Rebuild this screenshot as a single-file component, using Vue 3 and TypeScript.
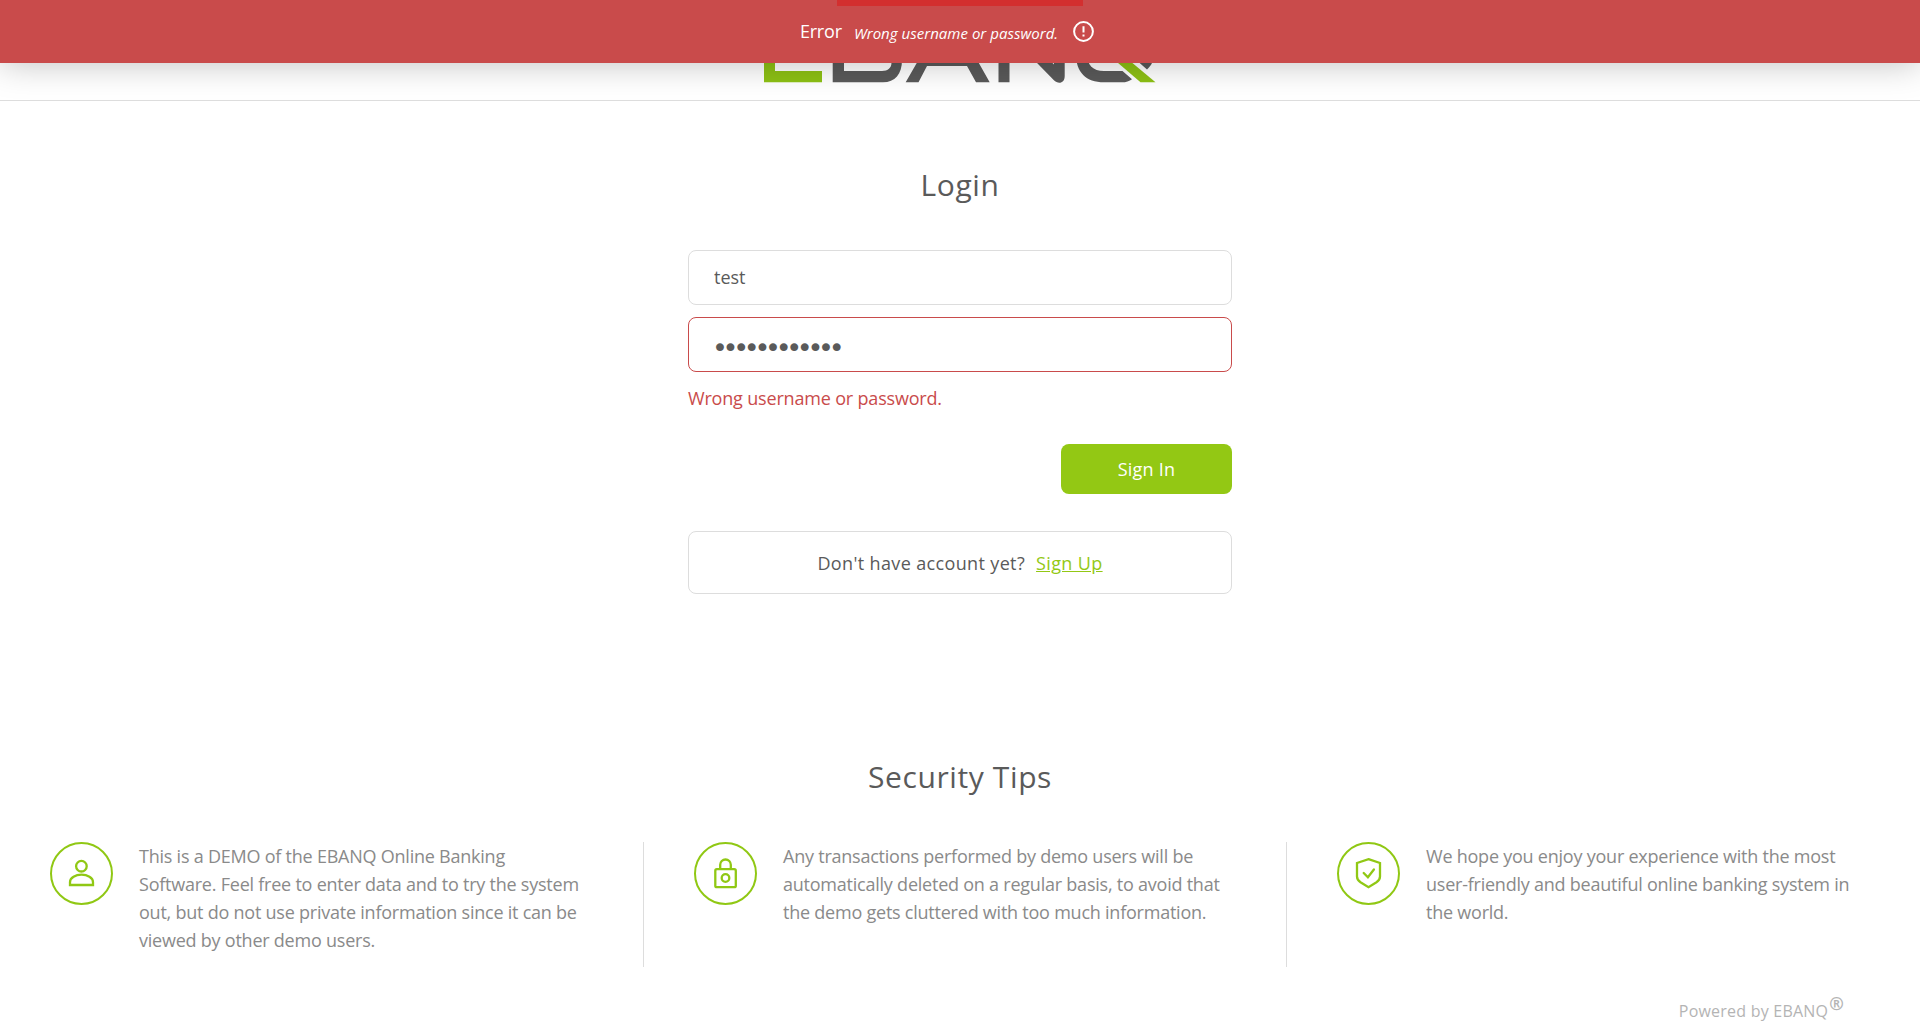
<script setup lang="ts">
import { ref } from 'vue'

type TipIcon = 'user' | 'lock' | 'shield'

interface Tip {
  icon: TipIcon
  lines: string[]
}

const username = ref('test')
const password = ref('testpassword')
const errorText = 'Wrong username or password.'

const tips: Tip[] = [
  {
    icon: 'user',
    lines: [
      'This is a DEMO of the EBANQ Online Banking',
      'Software. Feel free to enter data and to try the system',
      'out, but do not use private information since it can be',
      'viewed by other demo users.',
    ],
  },
  {
    icon: 'lock',
    lines: [
      'Any transactions performed by demo users will be',
      'automatically deleted on a regular basis, to avoid that',
      'the demo gets cluttered with too much information.',
    ],
  },
  {
    icon: 'shield',
    lines: [
      'We hope you enjoy your experience with the most',
      'user-friendly and beautiful online banking system in',
      'the world.',
    ],
  },
]
</script>

<template>
  <div class="page">
    <div class="toast" role="alert">
      <div class="toast-progress"></div>
      <span class="toast-title">Error</span>
      <em class="toast-message">{{ errorText }}</em>
      <svg class="toast-icon" width="21" height="21" viewBox="0 0 21 21" fill="none">
        <circle cx="10.5" cy="10.5" r="9.4" stroke="#fff" stroke-width="2" />
        <path d="M10.5 5.2v6.2M10.5 13.4v2.2" stroke="#fff" stroke-width="2" />
      </svg>
    </div>

    <header class="header">
      <svg class="logo" width="394" height="66" viewBox="763 18 394 66">
        <path fill="#8dc114" d="M764 19h58v11h-47v14h44v11h-44v16h47v11.3h-58z" />
        <path
          fill="#5a5a5a"
          fill-rule="evenodd"
          d="M832.7 19H884c11 0 17 6 17 15 0 7-2 11-6 14 5 2 7 6 7 12 0 14-7 22.300-19 22.300h-50.300zM844 30v14h38c10 0 10-14 0-14zM844 55v16h38c6 0 9.500-3 9.500-8.500s-3-7.500-9-7.500z"
        />
        <path fill="#5a5a5a" d="M905.700 82.300 942 19h12l35.700 63.300H976L967 66h-40l-8.500 16.300zM934 55h27l-13-24z" fill-rule="evenodd" />
        <path
          fill="#5a5a5a"
          d="M998.500 82.300V25c0-8 7-9 11-5l44.500 44.500V19h10.700v57c0 7.500-6.500 8.700-11 4L1009.500 35v47.300z"
        />
        <path
          fill="#5a5a5a"
          d="M1104 82.300c-18 0-28-10-28-28V47c0-18 10-28 28-28h22c18 0 28 10 28 28v7c0 6-2 11-7 15.500l-8.500-7.500c3-2 4.500-5 4.500-8v-7c0-11-6-17-17-17h-22c-11 0-17 6-17 17v7c0 11 6 17 17 17h18.500l9.500 8.200q-4 3.100-10 3.100z"
        />
        <path fill="#8dc114" d="M1107 53.500h14l34.500 28.800h-15z" />
      </svg>
    </header>

    <main class="login">
      <h1 class="heading">Login</h1>
      <form class="form" @submit.prevent>
        <input v-model="username" class="field" type="text" spellcheck="false" />
        <input v-model="password" class="field field-password field-invalid" type="password" />
        <p class="error">{{ errorText }}</p>
        <button class="submit" type="submit">Sign In</button>
      </form>
      <div class="signup">
        <span>Don't have account yet?</span>
        <a class="signup-link">Sign Up</a>
      </div>
    </main>

    <section class="security">
      <h2 class="heading">Security Tips</h2>
      <div class="tips">
        <article v-for="tip in tips" :key="tip.icon" class="tip">
          <svg class="tip-icon" width="63" height="63" viewBox="0 0 63 63" fill="none" stroke="#90c814" stroke-width="2.3">
            <circle cx="31.5" cy="31.5" r="30.5" stroke-width="2" />
            <template v-if="tip.icon === 'user'">
              <circle cx="31.400" cy="24.200" r="5.300" />
              <path d="M20 43v-2.800c0-4.600 5.600-7.500 11.500-7.500S43 35.600 43 40.200V43z" />
            </template>
            <template v-else-if="tip.icon === 'lock'">
              <rect x="21.300" y="27.200" width="20.500" height="18" rx="1.500" />
              <path d="M26.200 27v-4.200a5.300 5.300 0 0 1 10.600 0V27" />
              <circle cx="31.500" cy="36" r="3.800" />
            </template>
            <template v-else>
              <path d="M31.500 17.200 43 21v13.500c0 3-1.200 4.300-3.500 5.800l-8 4.900-8-4.900C21.200 38.800 20 37.500 20 34.500V21z" />
              <path d="m26.700 31 4.200 4.300 6-7.800" stroke-linecap="round" />
            </template>
          </svg>
          <p class="tip-text">
            <span v-for="line in tip.lines" :key="line" class="tip-line">{{ line }}</span>
          </p>
        </article>
      </div>
    </section>

    <footer class="footer">
      <span>Powered by EBANQ</span><span class="registered">®</span>
    </footer>
  </div>
</template>

<style>
body {
  margin: 0;
  background: #fff;
}
</style>

<style scoped>
.page {
  box-sizing: border-box;
  height: 1033px;
  overflow: hidden;
  display: flex;
  flex-direction: column;
  font-family: "Open Sans", "Noto Sans", sans-serif;
  font-size: 18px;
  color: #5a5a5a;
}

.toast {
  position: absolute;
  top: 0;
  left: 0;
  z-index: 2;
  box-sizing: border-box;
  width: 100%;
  height: 63px;
  padding-right: 26px;
  display: flex;
  align-items: center;
  justify-content: center;
  color: #fff;
  background: #c94b4b;
  box-shadow: 0 0 35px rgba(0, 0, 0, 0.26);
}

.toast-progress {
  position: absolute;
  top: 0;
  left: 837px;
  width: 246px;
  height: 6px;
  background: #d32f2f;
}

.toast-title {
  line-height: 24px;
  padding-bottom: 1px;
  letter-spacing: -0.18px;
}

.toast-message {
  margin-left: 12px;
  font-size: 15px;
  line-height: 24px;
  padding-top: 3px;
  letter-spacing: 0.03px;
}

.toast-icon {
  margin-left: 15px;
}

.header {
  box-sizing: border-box;
  height: 101px;
  flex: none;
  padding-top: 18px;
  border-bottom: 1px solid #ddd;
  display: flex;
  justify-content: center;
}

.logo {
  flex: none;
}

.heading {
  margin: 0;
  font-size: 30px;
  font-weight: 400;
  line-height: 40px;
  letter-spacing: 0.6px;
  text-align: center;
}

.login {
  width: 544px;
  height: 656px;
  flex: none;
  box-sizing: border-box;
  padding-top: 64px;
  align-self: center;
}

.form {
  margin-top: 45px;
  display: flex;
  flex-direction: column;
}

.field {
  box-sizing: border-box;
  width: 100%;
  height: 55px;
  margin: 0 0 12px;
  padding: 0 25px 2px;
  border: 1px solid #ddd;
  border-radius: 8px;
  outline: none;
  background: #fff;
  color: #5a5a5a;
  font-family: "Open Sans", "Noto Sans", sans-serif;
  font-size: 18px;
}

.field-password {
  padding: 6px 23px 0;
  font-family: "DejaVu Sans", sans-serif;
  font-size: 27px;
  letter-spacing: -5.32px;
}

.field-invalid {
  border-color: #c94b4b;
}

.error {
  margin: 0;
  line-height: 28px;
  letter-spacing: -0.18px;
  color: #c94b4b;
}

.submit {
  align-self: flex-end;
  width: 171px;
  height: 50px;
  margin-top: 32px;
  padding: 0;
  border: 0;
  border-radius: 8px;
  background: #93c814;
  color: #fff;
  font: inherit;
  letter-spacing: 0.22px;
}

.signup {
  box-sizing: border-box;
  height: 63px;
  margin-top: 37px;
  border: 1px solid #ddd;
  border-radius: 8px;
  display: flex;
  align-items: center;
  justify-content: center;
  gap: 11px;
  letter-spacing: 0.36px;
}

.signup-link {
  color: #93c814;
  text-decoration: underline;
}

.security {
  flex: none;
}

.tips {
  margin-top: 45px;
  display: grid;
  grid-template-columns: 644px 643px 1fr;
}

.tip {
  box-sizing: border-box;
  height: 125px;
  padding-left: 50px;
  display: flex;
  gap: 26px;
  border-right: 1px solid #ddd;
}

.tip:last-child {
  border-right: 0;
}

.tip-icon {
  flex: none;
}

.tip-text {
  margin: 0;
  line-height: 28px;
  letter-spacing: -0.23px;
  color: #8a8a8a;
}

.tip-line {
  display: block;
  white-space: nowrap;
}

.footer {
  margin-top: 32px;
  padding-right: 76px;
  display: flex;
  justify-content: flex-end;
  color: #b4b4b4;
  font-size: 16px;
  line-height: 24px;
  letter-spacing: 0.22px;
}

.registered {
  margin: -8px 0 0 1px;
  font-size: 17.5px;
  font-weight: 700;
}
</style>
